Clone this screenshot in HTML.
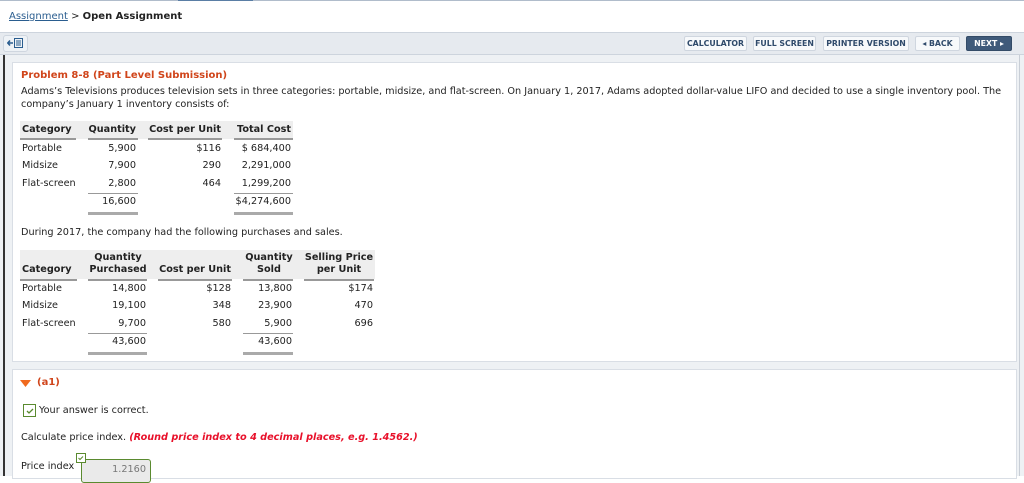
<!DOCTYPE html>
<html><head><meta charset="utf-8"><style>
*{margin:0;padding:0;box-sizing:border-box}
body{width:1024px;height:476px;overflow:hidden;background:#fff;font-family:"DejaVu Sans",Verdana,sans-serif;font-size:9.7px;color:#222;position:relative}
.a{position:absolute;white-space:nowrap}
.r{text-align:right}
.b{font-weight:bold}
.btn{position:absolute;top:36px;height:15px;border:1px solid #cfd6df;border-radius:2px;background:#f7f9fb;color:#2f4a6b;font-weight:bold;font-size:7.8px;line-height:13px;text-align:center}
.hl{position:absolute;height:2px;background:#999}
.tl{position:absolute;height:1px;background:#999}
.dl{position:absolute;height:3px;background:#aaa}
</style></head><body>
<div class="a" style="left:0;top:0;width:1024px;height:1px;background:#b0bccb"></div>
<div class="a" style="left:178px;top:0;width:75px;height:1px;background:#5a7ea5"></div>
<div class="a" style="left:9px;top:11px;font-size:10px"><span style="color:#2a5d8f;text-decoration:underline">Assignment</span> &gt; <b>Open Assignment</b></div>
<div class="a" style="left:0;top:32px;width:1024px;height:23px;background:#e6eaef;border-top:1px solid #cdd4dd;border-bottom:1px solid #cdd4dd"></div>
<div class="a" style="left:3px;top:35px;width:25px;height:17px;border:1px solid #cfd6df;border-radius:3px;background:#eef2f6"></div>
<svg class="a" style="left:7px;top:37px" width="18" height="12" viewBox="0 0 18 12"><path d="M1 6h5M3 3.5L0.8 6 3 8.5" stroke="#2a5d8f" stroke-width="1.6" fill="none"/><rect x="7.5" y="1.5" width="8" height="9" fill="none" stroke="#2a5d8f"/><path d="M9 4h5M9 6h5M9 8h5" stroke="#2a5d8f"/></svg>
<div class="btn" style="left:684px;width:63px">CALCULATOR</div>
<div class="btn" style="left:753px;width:63px">FULL SCREEN</div>
<div class="btn" style="left:823px;width:86px">PRINTER VERSION</div>
<div class="btn" style="left:915px;width:45px">◂ BACK</div>
<div class="btn" style="left:966px;width:46px;background:#3f5a7a;border-color:#334b67;color:#fff">NEXT ▸</div>
<div class="a" style="left:0;top:55px;width:1024px;height:421px;background:#eef1f4"></div>
<div class="a" style="left:3px;top:55px;width:2px;height:421px;background:#333"></div>
<div class="a" style="left:1019px;top:55px;width:1px;height:421px;background:#c8ced6"></div>
<div class="a" style="left:12px;top:62px;width:1005px;height:300px;background:#fff;border:1px solid #d9dee5"></div>
<div class="a" style="left:12px;top:369px;width:1005px;height:110px;background:#fff;border:1px solid #d9dee5"></div>
<div class="a b" style="left:21px;top:70px;color:#d0451b;font-size:10px">Problem 8-8 (Part Level Submission)</div>
<div class="a" style="left:21px;top:86px">Adams’s Televisions produces television sets in three categories: portable, midsize, and flat-screen. On January 1, 2017, Adams adopted dollar-value LIFO and decided to use a single inventory pool. The</div>
<div class="a" style="left:21px;top:99px">company’s January 1 inventory consists of:</div>
<div class="a" style="left:20px;top:121px;width:273px;height:18px;background:#eee"></div>
<div class="a b" style="left:22px;top:124px">Category</div>
<div class="a b r" style="left:80px;width:56px;top:124px">Quantity</div>
<div class="a b r" style="left:140px;width:81px;top:124px">Cost per Unit</div>
<div class="a b r" style="left:228px;width:63px;top:124px">Total Cost</div>
<div class="hl" style="left:20px;top:138px;width:56px"></div>
<div class="hl" style="left:88px;top:138px;width:50px"></div>
<div class="hl" style="left:148px;top:138px;width:74px"></div>
<div class="hl" style="left:234px;top:138px;width:59px"></div>
<div class="a" style="left:22px;top:143px">Portable</div><div class="a r" style="left:80px;width:56px;top:143px">5,900</div><div class="a r" style="left:140px;width:81px;top:143px">$116</div><div class="a r" style="left:228px;width:63px;top:143px">$ 684,400</div>
<div class="a" style="left:22px;top:160px">Midsize</div><div class="a r" style="left:80px;width:56px;top:160px">7,900</div><div class="a r" style="left:140px;width:81px;top:160px">290</div><div class="a r" style="left:228px;width:63px;top:160px">2,291,000</div>
<div class="a" style="left:22px;top:178px">Flat-screen</div><div class="a r" style="left:80px;width:56px;top:178px">2,800</div><div class="a r" style="left:140px;width:81px;top:178px">464</div><div class="a r" style="left:228px;width:63px;top:178px">1,299,200</div>
<div class="tl" style="left:88px;top:193px;width:50px"></div><div class="tl" style="left:234px;top:193px;width:59px"></div>
<div class="a r" style="left:80px;width:56px;top:196px">16,600</div><div class="a r" style="left:228px;width:63px;top:196px">$4,274,600</div>
<div class="dl" style="left:88px;top:212px;width:50px"></div><div class="dl" style="left:234px;top:212px;width:59px"></div>
<div class="a" style="left:21px;top:227px">During 2017, the company had the following purchases and sales.</div>
<div class="a" style="left:20px;top:250px;width:355px;height:29px;background:#eee"></div>
<div class="a b" style="left:22px;top:264px">Category</div>
<div class="a b" style="left:88px;width:60px;top:252px;text-align:center;line-height:12px">Quantity<br>Purchased</div>
<div class="a b r" style="left:150px;width:81px;top:264px">Cost per Unit</div>
<div class="a b" style="left:243px;width:52px;top:252px;text-align:center;line-height:12px">Quantity<br>Sold</div>
<div class="a b" style="left:303px;width:72px;top:252px;text-align:center;line-height:12px">Selling Price<br>per Unit</div>
<div class="hl" style="left:20px;top:279px;width:57px"></div>
<div class="hl" style="left:88px;top:279px;width:59px"></div>
<div class="hl" style="left:158px;top:279px;width:74px"></div>
<div class="hl" style="left:243px;top:279px;width:50px"></div>
<div class="hl" style="left:304px;top:279px;width:70px"></div>
<div class="a" style="left:22px;top:283px">Portable</div><div class="a r" style="left:90px;width:56px;top:283px">14,800</div><div class="a r" style="left:150px;width:81px;top:283px">$128</div><div class="a r" style="left:240px;width:52px;top:283px">13,800</div><div class="a r" style="left:300px;width:73px;top:283px">$174</div>
<div class="a" style="left:22px;top:300px">Midsize</div><div class="a r" style="left:90px;width:56px;top:300px">19,100</div><div class="a r" style="left:150px;width:81px;top:300px">348</div><div class="a r" style="left:240px;width:52px;top:300px">23,900</div><div class="a r" style="left:300px;width:73px;top:300px">470</div>
<div class="a" style="left:22px;top:318px">Flat-screen</div><div class="a r" style="left:90px;width:56px;top:318px">9,700</div><div class="a r" style="left:150px;width:81px;top:318px">580</div><div class="a r" style="left:240px;width:52px;top:318px">5,900</div><div class="a r" style="left:300px;width:73px;top:318px">696</div>
<div class="tl" style="left:88px;top:333px;width:59px"></div><div class="tl" style="left:243px;top:333px;width:50px"></div>
<div class="a r" style="left:90px;width:56px;top:336px">43,600</div><div class="a r" style="left:240px;width:52px;top:336px">43,600</div>
<div class="dl" style="left:88px;top:352px;width:59px"></div><div class="dl" style="left:243px;top:352px;width:50px"></div>
<svg class="a" style="left:20px;top:380px" width="12" height="8"><path d="M0 0h11L5.5 7z" fill="#f06a1f"/></svg>
<div class="a b" style="left:37px;top:377px;color:#d0451b;font-size:10px">(a1)</div>
<div class="a" style="left:23px;top:404px;width:13px;height:13px;border:1.5px solid #5a8a2f;background:#fff"></div>
<svg class="a" style="left:25px;top:406px" width="10" height="10"><path d="M2 5l2 2 4-4" stroke="#5a8a2f" stroke-width="1.3" fill="none"/></svg>
<div class="a" style="left:39px;top:405px">Your answer is correct.</div>
<div class="a" style="left:21px;top:432px">Calculate price index. <b><i style="color:#e8102a">(Round price index to 4 decimal places, e.g. 1.4562.)</i></b></div>
<div class="a" style="left:21px;top:461px">Price index</div>
<div class="a" style="left:81px;top:459px;width:70px;height:24px;border:1.5px solid #5a8a2f;border-radius:3px;background:#eaeaea"></div>
<div class="a r" style="left:84px;width:62px;top:464px;color:#777">1.2160</div>
<div class="a" style="left:76px;top:453px;width:10px;height:10px;border:1px solid #5a8a2f;background:#fff"></div>
<svg class="a" style="left:77px;top:454px" width="8" height="8"><path d="M1.5 4l1.5 1.5 3-3" stroke="#5a8a2f" fill="none"/></svg>
</body></html>
